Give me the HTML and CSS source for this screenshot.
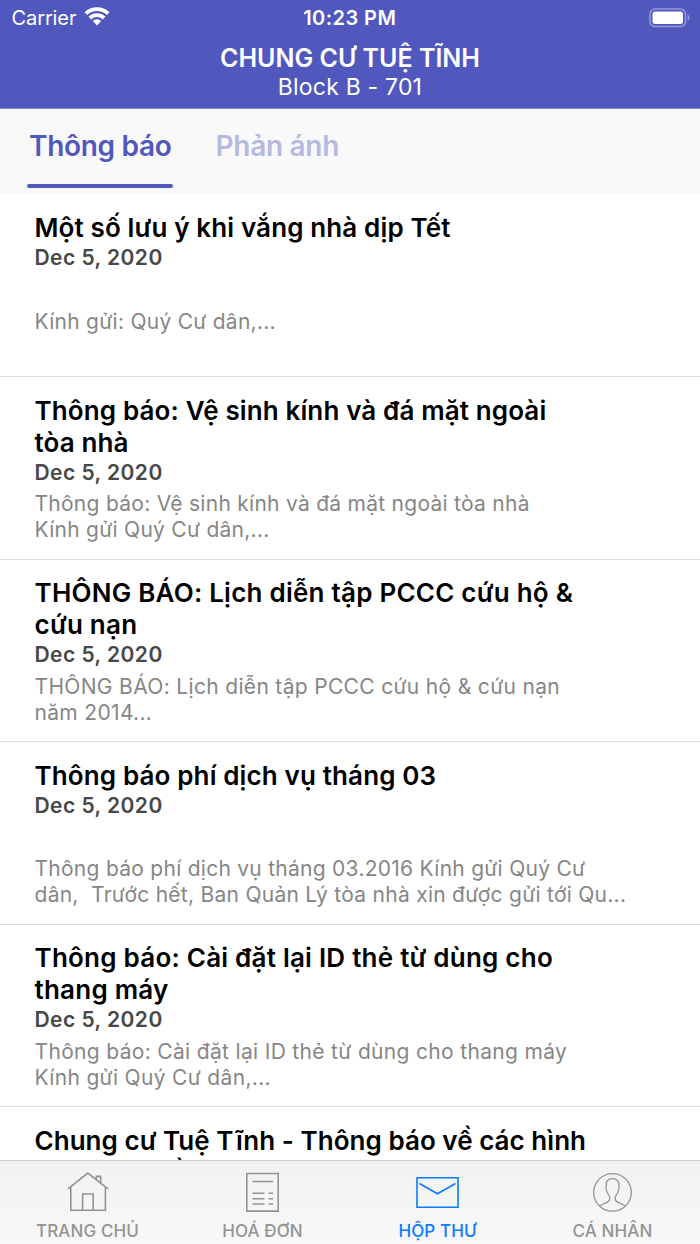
FILE: index.html
```html
<!DOCTYPE html>
<html lang="vi">
<head>
    <meta charset="UTF-8">
    <meta name="viewport" content="width=device-width, initial-scale=1.0">
    <title>Hộp thư</title>
    <link rel="stylesheet" href="styles.css">
</head>
<body>

    <header class="header">
        <div class="status">
            <div class="carrier">
                <span>Carrier</span>
                <svg class="wifi" viewBox="0 0 26 19"><path d="M.5 5.3a18 18 0 0 1 25 0l-2.6 2.8a14.2 14.2 0 0 0-19.8 0zM4.5 9.6a12.2 12.2 0 0 1 17 0l-2.7 2.8a8.3 8.3 0 0 0-11.6 0zM8.8 14a6.2 6.2 0 0 1 8.4 0L13 18.5z"/></svg>
            </div>
            <div class="time">10:23 PM</div>
            <div class="power">
                <svg class="battery" viewBox="0 0 42 20"><rect x="1" y="1" width="35.5" height="17.5" rx="5" fill="none" stroke="#fff" stroke-opacity=".4" stroke-width="1.5"/><rect x="3.5" y="3.5" width="30.5" height="12.5" rx="2.7" fill="#fff"/><path d="M38.6 6.6c2.6 1.4 2.6 5 0 6.4z" fill="#fff" fill-opacity=".4"/></svg>
            </div>
        </div>
        <h1>CHUNG CƯ TUỆ TĨNH</h1>
        <p class="block">Block B - 701</p>
    </header>

    <nav class="tabs">
        <a class="tab active" href="#">Thông báo</a>
        <a class="tab" href="#">Phản ánh</a>
    </nav>

    <main class="list">
        <article class="item">
            <h2>Một số lưu ý khi vắng nhà dịp Tết</h2>
            <time>Dec 5, 2020</time>
            <p class="text">Kính gửi: Quý Cư dân,...</p>
        </article>
        <article class="item">
            <h2>Thông báo: Vệ sinh kính và đá mặt ngoài<br>tòa nhà</h2>
            <time>Dec 5, 2020</time>
            <p class="text">Thông báo: Vệ sinh kính và đá mặt ngoài tòa nhà<br>Kính gửi Quý Cư dân,...</p>
        </article>
        <article class="item wide">
            <h2>THÔNG BÁO: Lịch diễn tập PCCC cứu hộ &amp;<br>cứu nạn</h2>
            <time>Dec 5, 2020</time>
            <p class="text">THÔNG BÁO: Lịch diễn tập PCCC cứu hộ &amp; cứu nạn<br>năm 2014...</p>
        </article>
        <article class="item">
            <h2>Thông báo phí dịch vụ tháng 03</h2>
            <time>Dec 5, 2020</time>
            <p class="text">Thông báo phí dịch vụ tháng 03.2016 Kính gửi Quý Cư<br>dân,&nbsp; Trước hết, Ban Quản Lý tòa nhà xin được gửi tới Qu...</p>
        </article>
        <article class="item wide">
            <h2>Thông báo: Cài đặt lại ID thẻ từ dùng cho<br>thang máy</h2>
            <time>Dec 5, 2020</time>
            <p class="text">Thông báo: Cài đặt lại ID thẻ từ dùng cho thang máy<br>Kính gửi Quý Cư dân,...</p>
        </article>
        <article class="item narrow">
            <h2>Chung cư Tuệ Tĩnh - Thông báo về các hình<br>thức nộp tiền phí</h2>
        </article>
    </main>

    <nav class="bar">
        <a href="#">
            <svg viewBox="0 0 44 44"><path d="M2 18.8 21.8 3 42 18.8M4.8 17v23.2h34.6V17M16.6 40V24h10.6v16M30.3 9.5V6.4h4.4v6.6"/></svg>
            <span>TRANG CHỦ</span>
        </a>
        <a href="#">
            <svg viewBox="0 0 44 44"><path d="M5.8 3.5h31.4v37.6H5.8zM11.5 11.5H32M11.5 23.3h12M11.5 28.8h12M11.5 34h12M27.5 23.3H32M27.5 28.8H32M27.5 34H32"/></svg>
            <span>HOÁ ĐƠN</span>
        </a>
        <a class="active" href="#">
            <svg viewBox="0 0 44 44"><path d="M1 7.7h41v29.6H1zM3.5 13.5l18 10.3 18-10.3"/></svg>
            <span>HỘP THƯ</span>
        </a>
        <a href="#">
            <svg class="user" viewBox="0 0 44 44"><circle cx="21.5" cy="22.4" r="18.8"/><path d="M8.500 36.200C12.500 33 18 32.500 18.600 30c.5-2.600-.1-4.500-1.700-6.400-.9-1.100-1.100-2.500-1.500-3.700-.8-1-.8-2.400-.2-3.500-.4-5.300 1.700-7.800 6.300-7.800s6.700 2.500 6.300 7.800c.6 1.100.6 2.500-.2 3.500-.4 1.200-.6 2.600-1.500 3.700-1.600 1.900-2.200 3.800-1.700 6.400.6 2.500 6.100 3 10.100 6.200"/></svg>
            <span>CÁ NHÂN</span>
        </a>
    </nav>

</body>
</html>
```
FILE: styles.css
```css
*{
    margin: 0;
    padding: 0;
    box-sizing: border-box;
}

body{
    height: 1244px;
    display: flex;
    flex-direction: column;
    overflow: hidden;
    background-color: #fff;
    color: #000;
    font-family: Inter, "Noto Sans", sans-serif;
}

a{text-decoration: none; color: inherit;}

/* Header */
.header{
    height: 109px;
    flex: none;
    background-color: #5058bd;
    border-bottom: 1px solid #8488b8;
    color: #fff;
    text-align: center;
}

.status{
    height: 36px;
    padding: 0 9px 0 11.5px;
    display: grid;
    grid-template-columns: 1fr auto 1fr;
    align-items: center;
}

.carrier{
    display: flex;
    align-items: center;
    gap: 8px;
    font-size: 20px;
    letter-spacing: -0.1px;
}

.wifi{
    width: 26px;
    height: 19px;
    fill: #fff;
    margin-top: -3px;
}

.time{
    font-size: 20px;
    font-weight: 600;
    letter-spacing: 0.45px;
    margin-right: 3px;
}

.power{
    display: flex;
    justify-content: flex-end;
}

.battery{
    width: 42px;
    height: 20px;
    margin-top: -1px;
}

.header h1{
    margin-top: 7px;
    font-size: 25px;
    line-height: 30px;
    font-weight: 600;
}

.block{
    font-size: 23px;
    line-height: 28px;
    letter-spacing: 0.2px;
}

/* Tabs */
.tabs{
    height: 85px;
    flex: none;
    display: flex;
    gap: 40.5px;
    padding: 0 27px;
    background-color: #f9f9f9;
}

.tab{
    position: relative;
    height: 78.5px;
    padding: 19px 1.5px 0 2px;
    font-size: 28px;
    line-height: 36px;
    font-weight: 600;
    letter-spacing: -0.3px;
    color: #b6b9e1;
}

.tab.active{
    color: #5058bd;
}

.tab.active::after{
    content: "";
    position: absolute;
    left: 0;
    right: 0;
    bottom: 0;
    height: 3.5px;
    border-radius: 2px;
    background-color: #5058bd;
}

/* List */
.list{
    flex: 1;
    min-height: 0;
    padding-top: 0.5px;
    overflow: hidden;
}

.item{
    height: 182.5px;
    padding: 17.5px 34.5px 15.5px;
    display: flex;
    flex-direction: column;
    border-bottom: 1px solid #dedede;
    white-space: nowrap;
}

.item h2{
    font-size: 26px;
    line-height: 32px;
    font-weight: 600;
    letter-spacing: 0.13px;
}

.item.wide h2{
    letter-spacing: 0.23px;
}

.item.narrow h2{
    letter-spacing: 0.04px;
}

.item time{
    font-size: 21px;
    line-height: 27px;
    font-weight: 600;
    letter-spacing: 0.45px;
    color: #484848;
}

.text{
    height: 52px;
    margin-top: auto;
    font-size: 21px;
    line-height: 26px;
    letter-spacing: 0.27px;
    color: #868686;
}

.wide .text{
    letter-spacing: 0.33px;
}

/* Bottom bar */
.bar{
    height: 84px;
    flex: none;
    display: grid;
    grid-template-columns: repeat(4, 1fr);
    background: linear-gradient(#f2f2f2, #f8f8f8);
    border-top: 1px solid #cfcfcf;
    color: #949494;
}

.bar a{
    display: flex;
    flex-direction: column;
    align-items: center;
    padding-top: 9px;
    font-size: 17px;
    line-height: 22px;
    font-weight: 500;
    letter-spacing: 0.1px;
}

.bar svg{
    width: 44px;
    height: 44px;
    margin-bottom: 6px;
    fill: none;
    stroke: currentColor;
    stroke-width: 1.6;
}

.bar .user{
    stroke-width: 1.3;
}

.bar .active{
    color: #0a7bff;
}
```
